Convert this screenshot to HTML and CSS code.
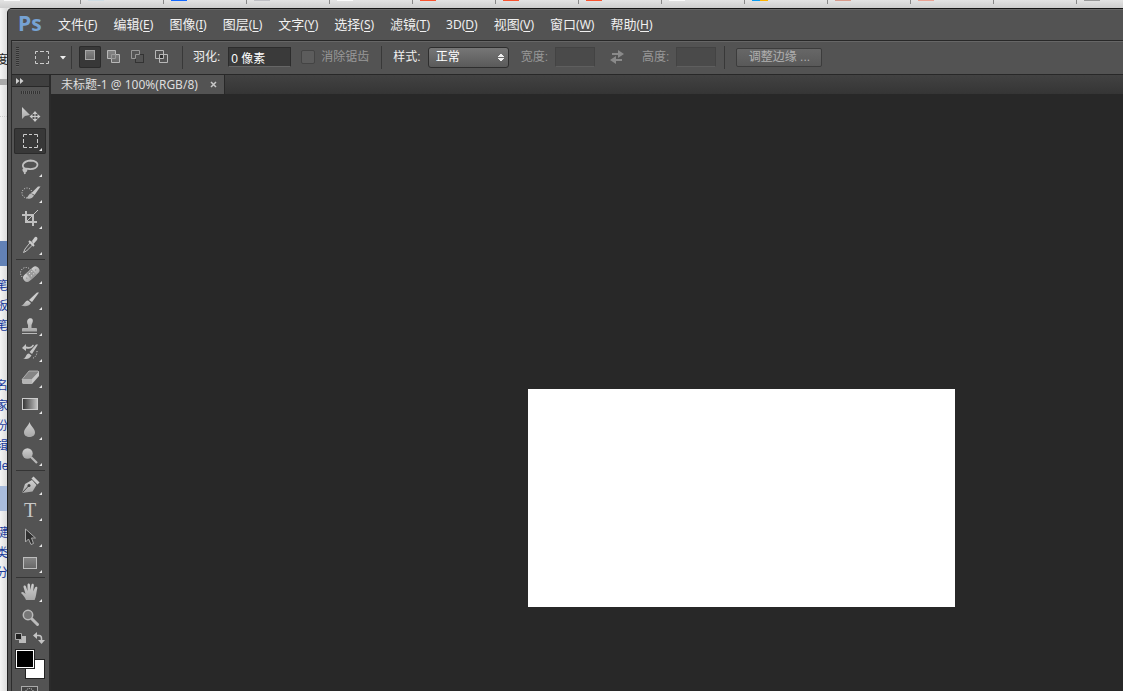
FILE: index.html
```html
<!DOCTYPE html>
<html lang="zh-CN">
<head>
<meta charset="utf-8">
<title>未标题-1 @ 100%(RGB/8)</title>
<link rel="stylesheet" href="styles.css">
</head>
<body>
<svg class="defs" width="0" height="0" aria-hidden="true">
  <defs>
    <linearGradient id="steel" x1="0" y1="0" x2="0" y2="1"><stop offset="0" stop-color="#d0d0d0"/><stop offset="1" stop-color="#a8a8a8"/></linearGradient>
    <linearGradient id="ramp"><stop offset="0" stop-color="#333"/><stop offset="1" stop-color="#c4c4c4"/></linearGradient>
    <linearGradient id="face" x1="0" y1="0" x2="0" y2="1"><stop offset="0" stop-color="#868686"/><stop offset="1" stop-color="#686868"/></linearGradient>
    <path id="more" d="M28 20v3h-3z" fill="#e8e8e8"/>
  </defs>
</svg>

<div class="browser-tabs" aria-hidden="true">
  <span class="tab first"><i class="fav white"></i></span>
  <span class="tab"><i class="fav ice"></i></span>
  <span class="tab"><i class="fav blue"></i></span>
  <span class="tab"><i class="fav silver"></i></span>
  <span class="tab"><i class="fav white"></i></span>
  <span class="tab"><i class="fav orange"></i></span>
  <span class="tab"><i class="fav orange"></i></span>
  <span class="tab"><i class="fav orange"></i></span>
  <span class="tab"><i class="fav white"></i></span>
  <span class="tab"><i class="fav duo"></i></span>
  <span class="tab"><i class="fav salmon"></i></span>
  <span class="tab"><i class="fav pink"></i></span>
  <span class="tab"></span>
  <span class="tab"><i class="fav gray"></i></span>
</div>

<div class="desktop">
  <aside class="behind">
    <p class="dark">度</p>
    <div class="bar"></div>
    <div class="dots"></div>
    <div class="block"></div>
    <p>笔</p><p>板</p><p>笔</p>
    <p class="gap">名</p><p>家</p><p>份</p><p>辑</p><p class="latin">le</p>
    <div class="block pale"></div>
    <p>键</p><p>类</p><p>分</p>
  </aside>

  <main class="window">
    <nav class="menubar">
      <span class="logo">Ps</span>
      <button>文件<small>(<u>F</u>)</small></button>
      <button>编辑<small>(<u>E</u>)</small></button>
      <button>图像<small>(<u>I</u>)</small></button>
      <button>图层<small>(<u>L</u>)</small></button>
      <button>文字<small>(<u>Y</u>)</small></button>
      <button>选择<small>(<u>S</u>)</small></button>
      <button>滤镜<small>(<u>T</u>)</small></button>
      <button><small>3D(<u>D</u>)</small></button>
      <button>视图<small>(<u>V</u>)</small></button>
      <button>窗口<small>(<u>W</u>)</small></button>
      <button>帮助<small>(<u>H</u>)</small></button>
    </nav>

    <div class="frame">
      <form class="options">
        <span class="grip"></span>
        <button type="button" class="preset" aria-label="工具预设">
          <svg width="32" height="20"><path d="M1.500 7V4.500H4M6 4.500h4M12 4.500h2.500V7M14.500 9v3M14.500 14v2.500H12M10 16.500H6M4 16.500H1.500V14M1.500 12V9" fill="none" stroke="#ccc"/><path d="M26 9h6l-3 3.500z" fill="#eee"/></svg>
        </button>
        <span class="rule"></span>
        <div class="modes">
          <button type="button" class="mode on" aria-label="新选区"><svg width="22" height="20"><rect x="6.500" y="3.500" width="9" height="9" fill="url(#face)" stroke="#a8a8a8"/></svg></button>
          <button type="button" class="mode" aria-label="添加到选区"><svg width="14" height="14"><path d="M.5.5h8v4h4v8h-8v-4h-4z" fill="url(#face)" stroke="#b8b8b8"/><path d="M4.500 8.500v-4h4v4z" fill="none" stroke="#999"/></svg></button>
          <button type="button" class="mode" aria-label="从选区减去"><svg width="14" height="14"><rect x="4.500" y="4.500" width="8" height="8" fill="none" stroke="#333"/><path d="M.5.5h8v4h-4v4h-4z" fill="#555" stroke="#999"/></svg></button>
          <button type="button" class="mode" aria-label="与选区交叉"><svg width="14" height="14"><path d="M.5.5h8v8h-8zM4.500 4.500h8v8h-8z" fill="none" stroke="#b8b8b8"/><path d="M5 5h3v3H5z" fill="#303030"/></svg></button>
        </div>
        <span class="rule"></span>
        <label class="field feather">羽化: <input type="text" value="0 像素"></label>
        <label class="check"><input type="checkbox" disabled>消除锯齿</label>
        <span class="rule"></span>
        <label class="field style">样式: <select><option>正常</option></select></label>
        <label class="field size">宽度: <input type="text" disabled></label>
        <button type="button" class="swap" aria-label="高度和宽度互换" disabled><svg width="16" height="14"><path d="M3 3h6V0l6 4-6 4V5H3zM13 9H7V6L1 10l6 4v-3h6z" fill="#8a8a8a"/></svg></button>
        <label class="field size">高度: <input type="text" disabled></label>
        <span class="rule"></span>
        <button type="button" class="refine" disabled>调整边缘 ...</button>
      </form>

      <div class="work">
        <div class="toolbox">
          <button class="collapse" aria-label="展开面板"><svg width="8" height="6"><path d="M0 0l3.500 3L0 6zM4 0l3.500 3L4 6z" fill="#d0d0d0"/></svg></button>
          <span class="handle"></span>
          <div class="tools">
            <button aria-label="移动工具"><svg width="32" height="26"><path d="M8 5v12l3-3 5-1z" fill="url(#steel)"/><path d="M21 9l2.500 3h-2v2h2v-2l3 2.500-3 2.500v-2h-2v2h2L21 20l-2.500-3h2v-2h-2v2l-3-2.500 3-2.500v2h2v-2h-2z" fill="#c8c8c8"/></svg></button>
            <button class="active" aria-label="矩形选框工具"><svg width="32" height="26"><path d="M9.500 9V6.500H13M15 6.500h3M20 6.500h3.500V9M23.500 11v4M23.500 17v2.500H20M18 19.500h-3M13 19.500H9.500V17M9.500 15v-4" fill="none" stroke="#ccc"/><use href="#more"/></svg></button>
            <button aria-label="套索工具"><svg width="32" height="26"><path d="M12 15C6 13 9 7 16.500 6.500c10 0 9 9-1 8.500-4-.5-7-.5-6 1.500s4 .5 2.500-1-2 2-1 4.500" fill="none" stroke="#c0c0c0" stroke-width="1.800"/><use href="#more"/></svg></button>
            <button aria-label="快速选择工具"><svg width="32" height="26"><circle cx="13" cy="13" r="5" fill="none" stroke="#ddd" stroke-dasharray="1 1.500"/><path d="M12 18c2 0 2-4 5-4.500l3 2C18 19 15 19.500 12 18z" fill="#b8b8b8"/><path d="M17.500 13L24 6.500h2.500l-6 8.500z" fill="#c8c8c8"/><use href="#more"/></svg></button>
            <button aria-label="裁剪工具"><svg width="32" height="26"><path d="M12 5v11h11M8 9h11v11" fill="none" stroke="#c0c0c0" stroke-width="2"/><path d="M13 15L24 4" stroke="#c4c4c4"/><use href="#more"/></svg></button>
            <button aria-label="吸管工具"><svg width="32" height="26"><path d="M17 9.500l2.500 2.500-7 7-3 1.500L11 17z" fill="#555" stroke="#c4c4c4"/><path d="M15 9l5 5" stroke="#ccc" stroke-width="2"/><path d="M18 9l2.500-3.500c1.500-2 4 .5 2.500 2.500L19.500 12z" fill="#ccc"/><use href="#more"/></svg></button>
            <hr>
            <button aria-label="污点修复画笔工具"><svg width="32" height="26"><circle cx="12" cy="12" r="5.500" fill="none" stroke="#ddd" stroke-dasharray="1 1.500"/><g transform="rotate(-42 17 12)"><rect x="7" y="9" width="19" height="8" rx="4" fill="url(#steel)"/><rect x="13" y="9" width="7" height="8" fill="#999"/><path d="M15 11.500h1m2 0h1m-4 3h1m2 0h1" stroke="#eee"/><path d="M10 13h1m11 0h1" stroke="#777"/></g><use href="#more"/></svg></button>
            <button aria-label="画笔工具"><svg width="32" height="26"><path d="M7 18.500c4-.5 3-4.500 7-5l3 2.500c-2 3.500-6 4-10 2.500z" fill="url(#steel)"/><path d="M15 13L23 5.500h2L18 15z" fill="#ccc"/><use href="#more"/></svg></button>
            <button aria-label="仿制图章工具"><svg width="32" height="26"><path d="M14 15v-3C10 4 21 3 18.500 9.500L17.500 12v3H22q1 0 1 1v2.500H8V16q0-1 1-1z" fill="url(#steel)"/><path d="M8 20.500h15" stroke="#bbb"/><use href="#more"/></svg></button>
            <button aria-label="历史记录画笔工具"><svg width="32" height="26"><path d="M8 9l4-4v2.500c4 1 5 .5 7-2l1 1c-2 3.500-5 3.500-8 3V12zM9 19.500c4-.5 2-4.500 6-5l2.500 2c-2 3.500-5 4-8.500 3zM15.500 13L22 5.500h2L18 15z" fill="#c4c4c4"/><path d="M23 12q0 6-5 7.500" fill="none" stroke="#ddd" stroke-dasharray="1 1.500"/><use href="#more"/></svg></button>
            <button aria-label="橡皮擦工具"><svg width="32" height="26"><path d="M15 6h9l1 1-7 7.500H8z" fill="#858585" stroke="#bbb" stroke-width=".8"/><path d="M8 14h10v5H9l-1-1z" fill="#b4b4b4"/><path d="M18 14l7-7.500V11l-7 8z" fill="#c6c6c6"/><use href="#more"/></svg></button>
            <button aria-label="渐变工具"><svg width="32" height="26"><rect x="8.500" y="7.500" width="15" height="11" fill="url(#ramp)" stroke="#ccc"/><use href="#more"/></svg></button>
            <button aria-label="模糊工具"><svg width="32" height="26"><path d="M15.500 5c1 4 5.500 6.500 5.500 10.500 0 6-11 6-11 0C10 11.500 14.500 9 15.500 5z" fill="url(#steel)"/><use href="#more"/></svg></button>
            <button aria-label="减淡工具"><svg width="32" height="26"><circle cx="13.500" cy="10.500" r="5.200" fill="url(#steel)"/><path d="M17 14l6 6" stroke="#b8b8b8" stroke-width="2.200"/><use href="#more"/></svg></button>
            <hr>
            <button aria-label="钢笔工具"><svg width="32" height="26"><path d="M8 21l3-9 7-4 4.500 5-4 6.500z" fill="url(#steel)"/><path d="M18.500 5.500l6 6" stroke="#ccc" stroke-width="3"/><path d="M8.500 20.500l6-6.500" stroke="#444"/><circle cx="15" cy="13.500" r="1.500" fill="#444"/><use href="#more"/></svg></button>
            <button aria-label="横排文字工具"><svg width="32" height="26"><text class="type" x="16" y="19" text-anchor="middle">T</text><use href="#more"/></svg></button>
            <button aria-label="路径选择工具"><svg width="32" height="26"><path d="M11.500 5v13l3-3 2.500 5.500 2.500-1-2-5.500h4z" fill="#303030" stroke="#aaa"/><use href="#more"/></svg></button>
            <button aria-label="矩形工具"><svg width="32" height="26"><rect x="9.500" y="7.500" width="13" height="11" fill="url(#face)" stroke="#bdbdbd"/><use href="#more"/></svg></button>
            <hr>
            <button aria-label="抓手工具"><svg width="32" height="26"><path d="M12 21c-1-3-3-5-5-7 1-2 3-.5 4.500 1L9.500 8c0-2 2-1.800 2.600 0l1.400 4V6c0-2 2.300-2 2.500 0l.4 5 1-5c.5-2 2.700-1.300 2.400.5l-.6 6 1.800-4c.9-1.500 2.800-.8 2.300.7-1 4-1 8.300-2.700 11.800z" fill="url(#steel)"/><use href="#more"/></svg></button>
            <button aria-label="缩放工具"><svg width="32" height="26"><path d="M18 14l5.500 5.500" stroke="#bbb" stroke-width="3" stroke-linecap="round"/><circle cx="14" cy="10" r="4.700" fill="#777" stroke="#bbb" stroke-width="1.500"/></svg></button>
          </div>
          <div class="mini">
            <button aria-label="默认前景色和背景色"><svg width="11" height="12"><path d="M4 4h7v7H4z" fill="#bbb"/><path d="M.5 1.500h6v6h-6z" fill="#222" stroke="#aaa"/></svg></button>
            <button aria-label="切换前景色和背景色"><svg width="12" height="12"><path d="M3 3.500h3q2.500 0 2.500 3V9" fill="none" stroke="#c4c4c4" stroke-width="1.500"/><path d="M4 0v7L0 3.500zM5 8h7l-3.500 4z" fill="#c4c4c4"/></svg></button>
          </div>
          <div class="swatches">
            <button class="swatch fore" aria-label="前景色"></button>
            <button class="swatch back" aria-label="背景色"></button>
          </div>
          <button class="mask" aria-label="快速蒙版"><svg width="18" height="14"><rect x=".5" y=".5" width="16" height="12" fill="#444" stroke="#aaa"/><circle cx="8.500" cy="6.500" r="4" fill="none" stroke="#ddd" stroke-dasharray="1 1"/></svg></button>
        </div>

        <section class="editor">
          <div class="doc-tabs">
            <div class="doc-tab"><span>未标题-1 @ 100%(RGB/8)</span><button aria-label="关闭"><svg width="7" height="7"><path d="M1 1l5 5M6 1L1 6" stroke="#c8c8c8" stroke-width="1.500"/></svg></button></div>
          </div>
          <div class="stage"><div class="sheet"></div></div>
        </section>
      </div>
    </div>
  </main>
</div>
</body>
</html>
```
FILE: styles.css
```css
* { box-sizing: border-box; }

body {
  margin: 0;
  height: 100vh;
  display: flex;
  flex-direction: column;
  overflow: hidden;
  background: #e6e6e6;
  color: #f0f0f0;
  font: 12px/16px "Liberation Sans", "Noto Sans CJK SC", sans-serif;
}

button {
  padding: 0;
  border: 0;
  background: none;
  color: inherit;
  font: inherit;
}

svg { display: block; }
.defs { position: absolute; }

/* browser strip */
.browser-tabs {
  flex: none;
  height: 8px;
  display: flex;
  overflow: hidden;
  background: linear-gradient(#e4e4e4, #cecece);
}
.tab {
  flex: none;
  width: 83px;
  height: 4px;
  padding-left: 7px;
  border-right: 1px solid #888;
}
.tab.first { width: 81px; padding-left: 4px; }
.fav { display: block; width: 16px; height: 1px; }
.white { background: #fafafa; }
.ice { background: #cfdde4; }
.blue { background: #1267ff; }
.silver { background: #bfbfc4; }
.orange { background: #f9532f; }
.duo { background: linear-gradient(90deg, #0a9cf0 50%, #ffb300 50%); }
.salmon { background: #d99b8b; }
.pink { background: #eaa394; }
.gray { background: #999; }

.desktop { flex: 1; min-height: 0; display: flex; background: #e6e6e6; }

/* page behind the window */
.behind {
  width: 7px;
  overflow: hidden;
  color: #1a3b9c;
  background: linear-gradient(90deg, #f4f4f4, #dcdcdc);
}
.behind p { margin: 0 0 0 -4px; width: 16px; line-height: 20px; }
.behind .dark { margin-top: 42px; color: #222; }
.behind .gap { margin-top: 40px; }
.behind .latin { margin-left: -1px; }
.bar { height: 6px; margin-top: 9px; background: #aaa; }
.dots { height: 32px; border-bottom: 1px dotted #ccc; }
.block { height: 25px; margin: 124px 0 10px; background: #6281b5; }
.block.pale { margin: 10px 0 12px; background: #a9bcdc; }

/* application window */
.window {
  flex: 1;
  min-width: 0;
  display: flex;
  flex-direction: column;
  border-top: 1px solid #151515;
  border-left: 1px solid #202020;
  border-top-left-radius: 5px;
  background: #535353;
  overflow: hidden;
}

.menubar {
  flex: none;
  height: 31px;
  display: flex;
  align-items: center;
  gap: 16px;
  padding-left: 10px;
  border-top: 1px solid #6a6a6a;
  font-size: 13px;
  white-space: nowrap;
}
.menubar small { font: 12px/16px "Noto Sans", sans-serif; }
.menubar u { text-underline-offset: 2px; }
.logo {
  width: 24px;
  color: #76a2d3;
  font: bold 21px/28px "Open Sans", sans-serif;
  padding-bottom: 4px;
}

.frame {
  flex: 1;
  min-height: 0;
  display: flex;
  flex-direction: column;
  margin-left: 3px;
  border-top: 1px solid #282828;
  border-left: 1px solid #2c2c2c;
}

.options {
  flex: none;
  height: 34px;
  display: flex;
  align-items: center;
  padding: 0 0 2px 4px;
  border-top: 1px solid #666;
  border-bottom: 1px solid #282828;
  white-space: nowrap;
}
.grip {
  width: 3px;
  height: 20px;
  margin-right: 15px;
  background: repeating-linear-gradient(#333 0 1px, #5e5e5e 1px 2px);
}
.preset { margin-right: 5px; }
.rule { width: 1px; height: 23px; background: #383838; }
.modes { display: flex; align-items: center; gap: 10px; margin: 0 13px 0 7px; }
.mode.on {
  height: 22px;
  margin-right: -4px;
  border-radius: 2px;
  background: #383838;
  box-shadow: inset 0 0 0 1px #2b2b2b;
}
.field { display: flex; align-items: center; gap: 8px; }
.field input {
  height: 20px;
  padding: 0 2px;
  border: 1px solid #2c2c2c;
  border-bottom-color: #666;
  background: #3a3a3a;
  color: #fff;
  font: inherit;
}
.feather { margin: 0 10px; }
.feather input { width: 63px; }
.check { display: flex; align-items: center; gap: 6px; margin-right: 12px; color: #989898; }
.check input {
  appearance: none;
  width: 14px;
  height: 14px;
  margin: 0;
  border: 1px solid #444;
  border-radius: 2px;
  background: #5c5c5c;
}
.style { gap: 7px; margin: 0 12px 0 11px; }
.style select {
  appearance: none;
  width: 81px;
  height: 21px;
  padding: 0 7px;
  border: 1px solid #2e2e2e;
  border-radius: 3px;
  color: #fff;
  font: inherit;
  background:
    conic-gradient(from 143deg at 50% 0, #eee 0 74deg, transparent 74deg) right 4px top 5px / 6px 4px no-repeat,
    conic-gradient(from -37deg at 50% 100%, #eee 0 74deg, transparent 74deg) right 4px bottom 5px / 6px 4px no-repeat,
    linear-gradient(#767676, #5a5a5a);
}
.size { gap: 7px; color: #989898; }
.size input { width: 40px; border-color: #434343; border-bottom-color: #5e5e5e; background: #4a4a4a; }
.swap { margin: 0 17px 0 14px; }
.refine {
  width: 86px;
  height: 19px;
  margin-left: 11px;
  border: 1px solid #3c3c3c;
  border-radius: 2px;
  background: linear-gradient(#676767, #595959);
  color: #b0b0b0;
}
.options > .size + .rule { margin-left: 8px; }

.work { flex: 1; min-height: 0; display: flex; }

/* tools */
.toolbox {
  flex: none;
  width: 39px;
  display: flex;
  flex-direction: column;
  overflow: hidden;
  border-right: 2px solid #2b2b2b;
}
.toolbox > * { flex: none; }
.collapse {
  height: 12px;
  padding-left: 4px;
  border-bottom: 1px solid #282828;
  background: #404040;
}
.handle {
  width: 19px;
  height: 3px;
  margin: 4px 0 8px 9px;
  background: repeating-linear-gradient(90deg, #333 0 1px, #5e5e5e 1px 2px);
}
.tools { display: flex; flex-direction: column; padding-left: 2px; }
.tools button { width: 32px; height: 26px; }
.tools .active {
  border-radius: 2px;
  background: #383838;
  box-shadow: inset 0 0 0 1px #2b2b2b;
}
.tools hr {
  width: 29px;
  height: 1px;
  margin: 1px 0 1px 2px;
  border: 0;
  background: #343434;
}
.type { fill: #c8c8c8; font: 20px "Liberation Serif", serif; }
.mini { display: flex; gap: 7px; padding: 1px 3px 5px; }
.swatches { display: grid; width: 30px; height: 30px; margin-left: 3px; }
.swatch {
  grid-area: 1 / 1;
  width: 20px;
  height: 20px;
  border: 1px solid #222;
  background: #fff;
}
.fore { z-index: 1; background: #000; box-shadow: inset 0 0 0 1px #fff; }
.back { align-self: end; justify-self: end; }
.mask { margin: 7px 0 0 9px; }

/* document */
.editor { flex: 1; min-width: 0; display: flex; flex-direction: column; background: #282828; }
.doc-tabs {
  flex: none;
  display: flex;
  height: 19px;
  background: linear-gradient(#424242, #353535);
}
.doc-tab {
  display: flex;
  align-items: center;
  gap: 12px;
  padding: 0 7px 0 10px;
  border-right: 1px solid #282828;
  background: #535353;
  color: #ddd;
  font: 12px/20px "Noto Sans", "Noto Sans CJK SC", sans-serif;
  white-space: nowrap;
}
.stage { flex: 1; padding: 295px 0 0 477px; }
.sheet { width: 427px; height: 218px; background: #fff; }
```
